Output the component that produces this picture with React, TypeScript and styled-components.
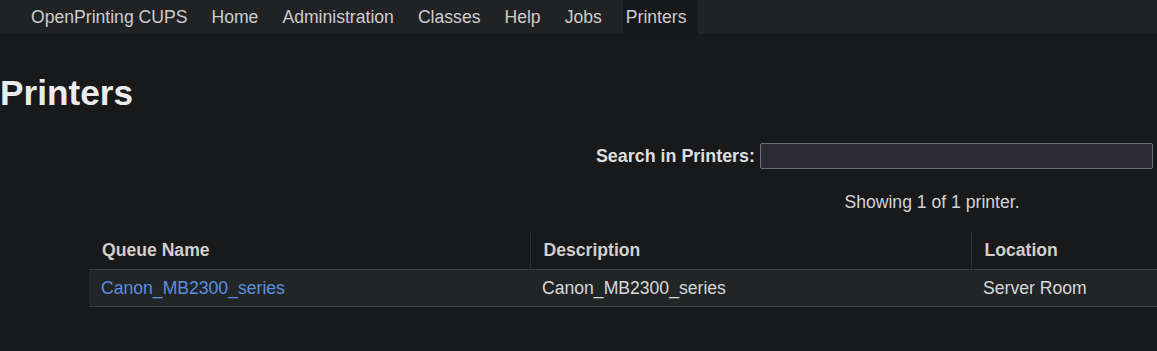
import React from 'react';
import styled, { createGlobalStyle } from 'styled-components';

const GlobalStyle = createGlobalStyle`
  html, body {
    margin: 0;
    padding: 0;
    background: #18191b;
    overflow: hidden;
  }
  body {
    font-family: "Liberation Sans", Arial, Helvetica, sans-serif;
    font-size: 17.6px;
    color: #d6d6d6;
  }
`;

const Page = styled.div`
  width: 1157px;
  height: 351px;
  overflow: hidden;
  background: #18191b;
`;

const NavBar = styled.nav`
  display: flex;
  align-items: stretch;
  gap: 9px;
  height: 34px;
  padding-left: 28px;
  background: #212224;
`;

const NavLink = styled.a<{ $active?: boolean }>`
  display: flex;
  align-items: center;
  padding: 0 12px 0 3px;
  color: #cdcdcd;
  text-decoration: none;
  line-height: 34px;
  background: ${(p) => (p.$active ? '#17181a' : 'transparent')};
`;

const Heading = styled.h1`
  margin: 38px 0 0 0;
  font-size: 35.2px;
  line-height: 42px;
  font-weight: bold;
  color: #ececec;
`;

const SearchRow = styled.form`
  display: flex;
  justify-content: flex-end;
  align-items: center;
  gap: 5px;
  margin-top: 29px;
  padding-right: 4px;
`;

const SearchLabel = styled.label`
  font-weight: bold;
  font-size: 17.9px;
  color: #dedede;
`;

const SearchInput = styled.input`
  box-sizing: border-box;
  width: 393px;
  height: 26px;
  background: #2a2935;
  border: 1px solid #707074;
  border-radius: 2px;
  color: #e0e0e0;
  outline: none;
`;

const Pager = styled.div`
  width: 450px;
  margin: 22px 0 0 auto;
  text-align: center;
  line-height: 22px;
  color: #d4d4d4;
`;

const Table = styled.table`
  width: 1323px;
  margin: 18px 0 0 89px;
  border-collapse: collapse;
  table-layout: fixed;
`;

const HeadCell = styled.th<{ $divider?: boolean }>`
  height: 38px;
  padding: 0 13px;
  text-align: left;
  font-weight: bold;
  color: #d2cfcb;
  border-bottom: 1px solid #3a3c3e;
  border-left: ${(p) => (p.$divider ? '1px solid #2e2f31' : 'none')};
`;

const Row = styled.tr`
  background: #222526;
`;

const Cell = styled.td`
  height: 36px;
  padding: 0 12px;
  color: #d8d8d8;
  border-bottom: 1px solid #3a3c3e;
`;

const QueueLink = styled.a`
  color: #5b8ee0;
  text-decoration: none;
`;

const navItems = ['OpenPrinting CUPS', 'Home', 'Administration', 'Classes', 'Help', 'Jobs', 'Printers'];

export default function App() {
  return (
    <Page>
      <GlobalStyle />
      <NavBar>
        {navItems.map((item) => (
          <NavLink key={item} href="#" $active={item === 'Printers'}>
            {item}
          </NavLink>
        ))}
      </NavBar>
      <Heading>Printers</Heading>
      <SearchRow onSubmit={(e) => e.preventDefault()}>
        <SearchLabel htmlFor="query">Search in Printers:</SearchLabel>
        <SearchInput id="query" type="search" />
      </SearchRow>
      <Pager>Showing 1 of 1 printer.</Pager>
      <Table>
        <thead>
          <tr>
            <HeadCell>Queue Name</HeadCell>
            <HeadCell $divider>Description</HeadCell>
            <HeadCell $divider>Location</HeadCell>
          </tr>
        </thead>
        <tbody>
          <Row>
            <Cell>
              <QueueLink href="#">Canon_MB2300_series</QueueLink>
            </Cell>
            <Cell>Canon_MB2300_series</Cell>
            <Cell>Server Room</Cell>
          </Row>
        </tbody>
      </Table>
    </Page>
  );
}
